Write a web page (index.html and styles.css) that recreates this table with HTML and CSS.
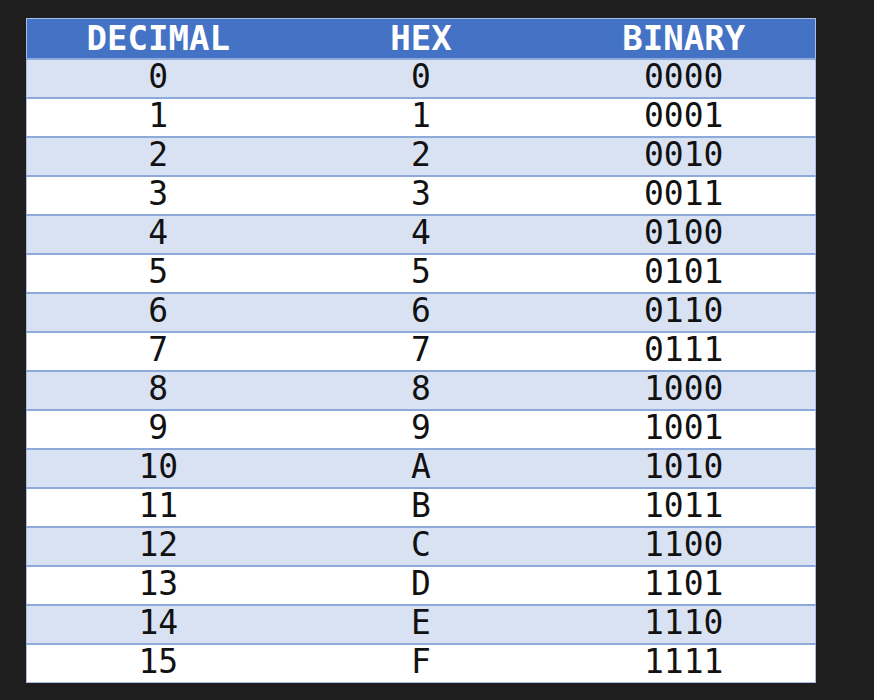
FILE: index.html
```html
<!DOCTYPE html>
<html>
<head>
<meta charset="utf-8">
<link rel="stylesheet" href="styles.css">
</head>
<body>
<div class="page">
<table class="conv">
<thead>
<tr><th>DECIMAL</th><th>HEX</th><th>BINARY</th></tr>
</thead>
<tbody>
<tr><td>0</td><td>0</td><td>0000</td></tr>
<tr><td>1</td><td>1</td><td>0001</td></tr>
<tr><td>2</td><td>2</td><td>0010</td></tr>
<tr><td>3</td><td>3</td><td>0011</td></tr>
<tr><td>4</td><td>4</td><td>0100</td></tr>
<tr><td>5</td><td>5</td><td>0101</td></tr>
<tr><td>6</td><td>6</td><td>0110</td></tr>
<tr><td>7</td><td>7</td><td>0111</td></tr>
<tr><td>8</td><td>8</td><td>1000</td></tr>
<tr><td>9</td><td>9</td><td>1001</td></tr>
<tr><td>10</td><td>A</td><td>1010</td></tr>
<tr><td>11</td><td>B</td><td>1011</td></tr>
<tr><td>12</td><td>C</td><td>1100</td></tr>
<tr><td>13</td><td>D</td><td>1101</td></tr>
<tr><td>14</td><td>E</td><td>1110</td></tr>
<tr><td>15</td><td>F</td><td>1111</td></tr>
</tbody>
</table>
</div>
</body>
</html>
```
FILE: styles.css
```css
html, body {
  margin: 0;
  padding: 0;
  background: #1e1e1e;
  height: 100%;
}
.page {
  padding: 18px 0 0 26px;
}
.conv {
  width: 790px;
  border-collapse: collapse;
  table-layout: fixed;
  font-family: "DejaVu Sans Mono", "Liberation Mono", monospace;
  font-size: 33px;
  color: #111;
  border: 1px solid #a9bde6;
}
.conv th {
  background: #4472c4;
  color: #fff;
  font-weight: bold;
  height: 39px;
  padding: 0;
  line-height: 39px;
  text-align: center;
  font-size: 34px;
}
.conv td {
  height: 33px;
  padding: 0 0 4px 0;
  line-height: 33px;
  text-align: center;
  border-top: 2px solid #8eaadb;
}
.conv tbody tr:nth-child(odd) td {
  background: #d9e2f3;
}
.conv tbody tr:nth-child(even) td {
  background: #ffffff;
}
```
